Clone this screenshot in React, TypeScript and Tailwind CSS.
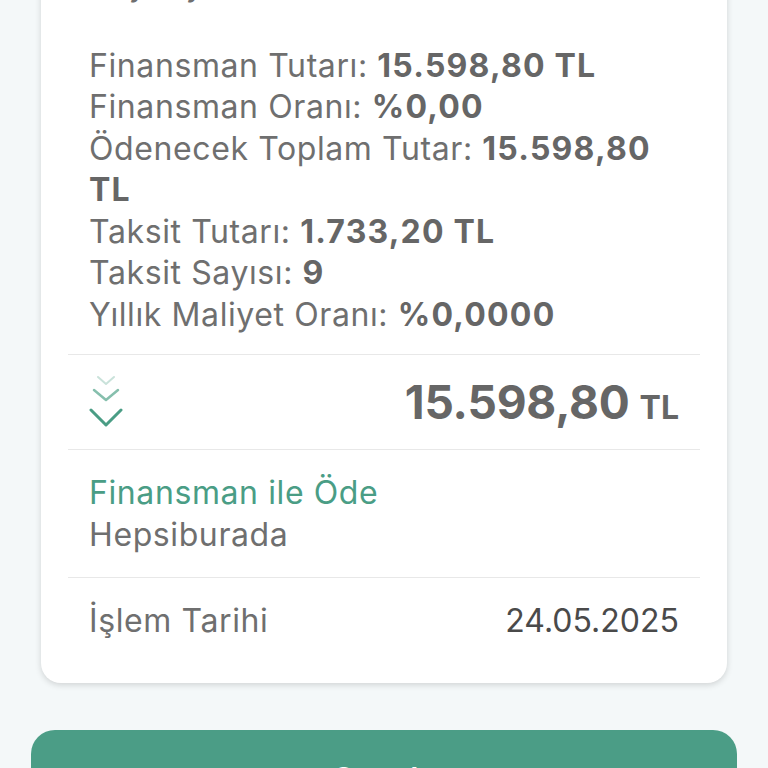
import React from "react";

const info = [
  { label: "Finansman Tutarı:", value: "15.598,80 TL" },
  { label: "Finansman Oranı:", value: "%0,00" },
  { label: "Ödenecek Toplam Tutar:", value: "15.598,80 TL" },
  { label: "Taksit Tutarı:", value: "1.733,20 TL" },
  { label: "Taksit Sayısı:", value: "9" },
  { label: "Yıllık Maliyet Oranı:", value: "%0,0000" },
];

function Chevrons() {
  return (
    <svg width="36" height="56" viewBox="0 0 36 56" fill="none" strokeLinecap="round" strokeLinejoin="round">
      <path d="M9 3 L17 10 L25 3" stroke="#c9e2da" strokeWidth="2" />
      <path d="M5 16 L17 26 L29 16" stroke="#86bfad" strokeWidth="2.5" />
      <path d="M2 36 L17 51 L32 36" stroke="#4a9d85" strokeWidth="3" />
    </svg>
  );
}

export default function App() {
  return (
    <div
      className="min-h-[768px] h-[768px] overflow-hidden bg-[#f4f8f9] text-[#6f6f6f]"
      style={{ fontFamily: "Inter, 'Noto Sans', sans-serif" }}
    >
      <div className="mx-[41px] -mt-[36px] bg-white rounded-b-[20px] shadow-[0_2px_6px_rgba(0,0,0,0.15)]">
        <div className="px-[48px] text-[32px] leading-[41.5px] tracking-[0.6px]">
          <div className="pb-[39px]">Bayi Ayrıntıları</div>
          {info.map((row) => (
            <div key={row.label}>
              {row.label} <span className="font-bold text-[#666] tracking-[1.2px]">{row.value}</span>
            </div>
          ))}
        </div>

        <div className="mx-[27px] mt-[19px] border-t border-[#e8e8e8]" />
        <div className="mx-[27px] h-[94px] flex items-center justify-between pl-[21px] pr-[21px]">
          <Chevrons />
          <div className="font-bold text-[#666] flex items-baseline gap-[10px]">
            <span className="text-[46px] tracking-[-0.2px]">15.598,80</span>
            <span className="text-[32px]">TL</span>
          </div>
        </div>
        <div className="mx-[27px] border-t border-[#e8e8e8]" />

        <div className="px-[48px] pt-[22px] pb-[22px] text-[32px] leading-[41.5px] tracking-[0.6px]">
          <div className="text-[#4a9d85]">Finansman ile Öde</div>
          <div>Hepsiburada</div>
        </div>
        <div className="mx-[27px] border-t border-[#e8e8e8]" />

        <div className="px-[48px] pt-[22px] pb-[41px] flex justify-between text-[32px] leading-[41.5px] tracking-[0.6px]">
          <span>İşlem Tarihi</span>
          <span className="text-[#4a4a4a] tracking-[0px]">24.05.2025</span>
        </div>
      </div>

      <div className="mx-[31px] mt-[47px] rounded-[24px] bg-[#4b9d86] pt-[28px] pb-[22px] text-center text-white text-[31px] font-semibold leading-[41.5px]">
        Onayla
      </div>
    </div>
  );
}
